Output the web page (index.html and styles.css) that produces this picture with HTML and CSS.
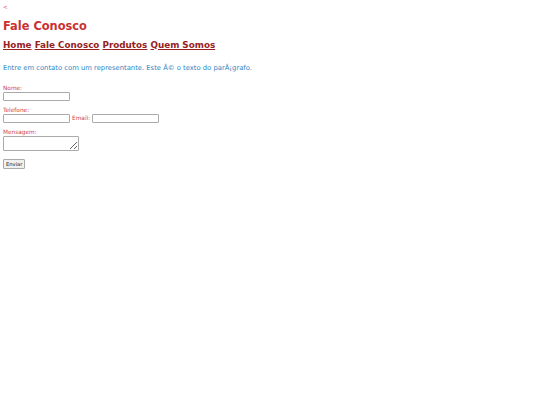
FILE: index.html
```html
<!DOCTYPE html>
<html lang="pt">
<head>
<meta charset="utf-8">
<title>Fale Conosco</title>
<link rel="stylesheet" href="styles.css">
</head>
<body>
<a class="back" href="#">&lt;</a>
<h1 class="title">Fale Conosco</h1>
<nav class="menu">
  <a href="#">Home</a> <a href="#">Fale Conosco</a> <a href="#">Produtos</a> <a href="#">Quem Somos</a>
</nav>
<p class="intro">Entre em contato com um representante. Este Ã© o texto do parÃ¡grafo.</p>
<form class="contact">
  <div class="row">
    <label class="lbl" for="nome">Nome:</label><br>
    <input class="field" id="nome" type="text">
  </div>
  <div class="row">
    <label class="lbl" for="tel">Telefone:</label><br>
    <input class="field" id="tel" type="text">
    <label class="lbl" for="email">Email:</label>
    <input class="field" id="email" type="text">
  </div>
  <div class="row">
    <label class="lbl" for="msg">Mensagem:</label><br>
    <textarea class="area" id="msg"></textarea>
  </div>
  <div class="row">
    <button class="send" type="button">Enviar</button>
  </div>
</form>
</body>
</html>
```
FILE: styles.css
```css
html { background: #fff; }
body {
  margin: 3px;
  font-family: "DejaVu Sans", Verdana, sans-serif;
  font-size: 6.4px;
}
.back {
  display: block;
  color: #d06060;
  text-decoration: none;
  font-size: 5.6px;
  line-height: 8.5px;
}
.title {
  font-size: 11.4px;
  color: #c83232;
  margin: 7px 0 7px;
  line-height: 14px;
}
.menu {
  font-size: 8.8px;
  font-weight: bold;
  line-height: 11px;
  margin: 0 0 13.5px;
}
.menu a {
  color: #962222;
  text-decoration: underline;
}
.intro {
  color: #2e86c1;
  font-size: 6.8px;
  margin: 0 0 13px;
  line-height: 8px;
}
.contact { margin: 0; }
.row { margin-bottom: 6px; line-height: 7px; }
.lbl {
  color: #d04545;
  font-size: 5.8px;
}
.field {
  width: 63px;
  height: 7px;
  border: 1px solid #aaa;
  border-radius: 1px;
  padding: 0 1px;
  margin: 0;
  font-size: 5.6px;
  vertical-align: middle;
}
.area {
  width: 72px;
  height: 13px;
  border: 1px solid #aaa;
  border-radius: 1px;
  padding: 0 1px;
  margin: 0;
  font-size: 5.6px;
  resize: both;
}
.send {
  font-family: inherit;
  font-size: 5.2px;
  padding: 1px 2px;
  border: 1px solid #aaa;
  border-radius: 1px;
  background: #f0f0f0;
  color: #222;
  margin: 0;
  line-height: 6px;
}
```
